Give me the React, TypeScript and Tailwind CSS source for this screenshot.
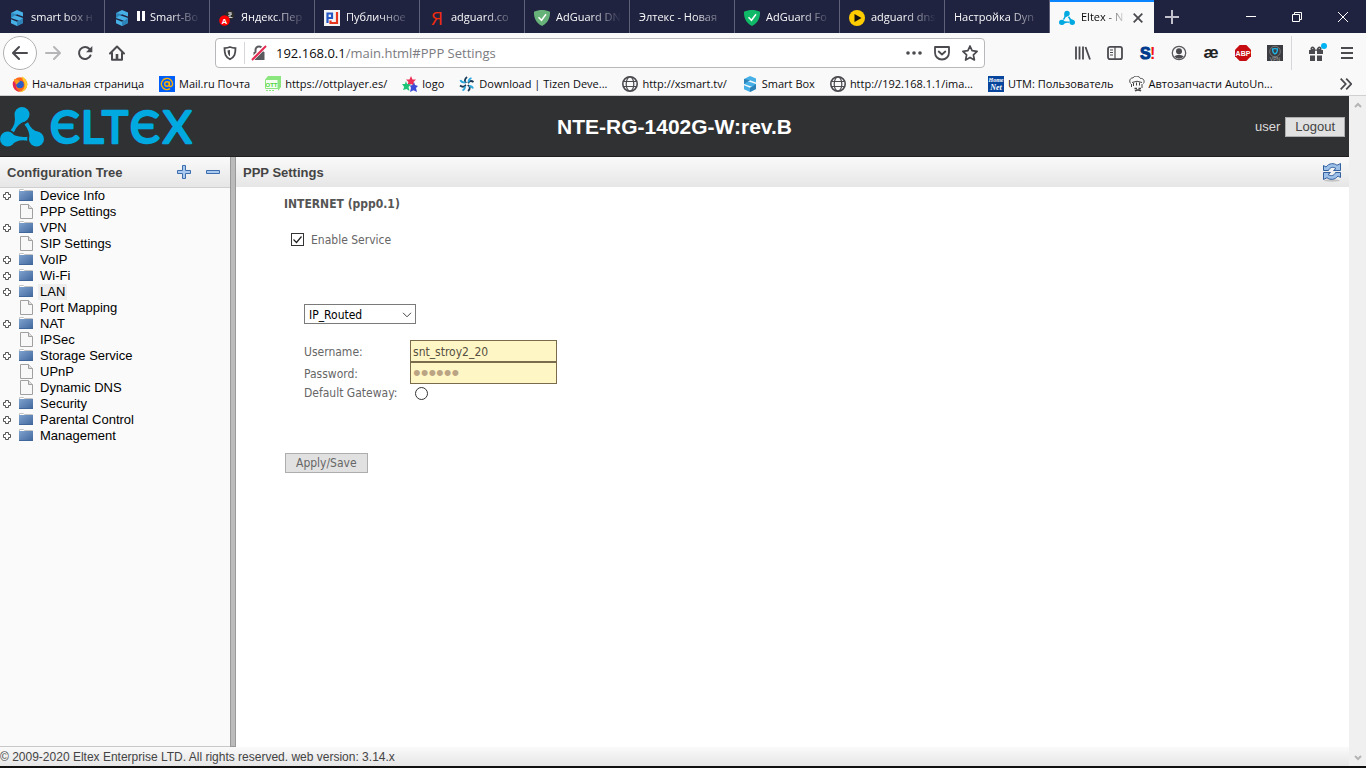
import React, { useState } from 'react';

type IconProps = { className?: string };

const SmartBoxIcon = () => (
  <svg viewBox="0 0 16 16" className="h-4 w-4 shrink-0">
    <path d="M8 0 14 2.600v4L8 4.300 6 5.200 14 8v5L8 16 2 13.200v-4l6 2.500 2-1L2 8V3z" fill="#46b0e6" />
    <path d="M14 8v5L8 16v-4.300l2-1zM2 3l6 1.300L6 5.200 2 8z" fill="#2d83b8" />
  </svg>
);

const TranslateIcon = () => (
  <svg viewBox="0 0 16 16" className="h-4 w-4 shrink-0">
    <circle cx="11" cy="5" r="4.500" fill="#2b2b2b" />
    <path d="M9 3h4M11 2v5M9 6l4-2M9.500 7.500h4" stroke="#ddd" strokeWidth=".9" />
    <circle cx="5.500" cy="10.500" r="5.300" fill="#f00" />
    <text x="5.500" y="13.500" textAnchor="middle" fontSize="8" fontWeight="700" fill="#fff" fontFamily="Liberation Sans">A</text>
  </svg>
);

const PublicIcon = () => (
  <svg viewBox="0 0 16 16" className="h-4 w-4 shrink-0">
    <path d="M0 0h16v16H0z" fill="#f4f4f4" />
    <path d="M3.500 13V3.500h4.500v4.500H3.500" fill="none" stroke="#2456c4" strokeWidth="2.200" />
    <path d="M13 2v11H6.500v-2.500" fill="none" stroke="#e8351e" strokeWidth="2.200" />
  </svg>
);

const YandexIcon = () => (
  <svg viewBox="0 0 16 16" className="h-4 w-4 shrink-0 overflow-visible">
    <text x="8" y="15" textAnchor="middle" fontSize="19" fill="#f22b0c" fontFamily="Open Sans">Я</text>
  </svg>
);

const AdguardIcon = ({ className }: IconProps) => (
  <svg viewBox="0 0 16 16" className={`h-4 w-4 shrink-0 ${className}`}>
    <path d="M8 0c2.600 0 5.500.5 8 1.700C16 4.500 16.300 11.500 8 16-.3 11.500 0 4.500 0 1.700 2.500.5 5.400 0 8 0z" fill="currentColor" />
    <path d="m4.500 7.300 3 3 4.500-6" fill="none" stroke="#fff" strokeWidth="1.500" />
  </svg>
);

const PlayIcon = () => (
  <svg viewBox="0 0 16 16" className="h-4 w-4 shrink-0">
    <circle cx="8" cy="8" r="8" fill="#fc0" />
    <path d="m5.500 4 7 4-7 4z" fill="#111" />
  </svg>
);

const EltexMark = ({ className }: IconProps) => (
  <svg viewBox="0 0 44 40" className={className} fill="#00a9e0">
    <circle cx="22" cy="7.500" r="7.500" />
    <circle cx="7.500" cy="32" r="7.500" />
    <circle cx="36.500" cy="32" r="7.500" />
    <path d="M14.700 9q1.300 8-4 14.200l3.300 2Q17 17 25.500 14z" />
    <path d="M8.500 24.500q7 6.500 18.800 5.200v4Q17 32 10 39z" />
    <path d="M24.500 17.500 28 15.300q3.500 8.700 11.300 9.900L29.500 34q1-9.500-5-16.500z" />
  </svg>
);

const EltexLogo = () => (
  <svg width="194" height="42" viewBox="0 0 194 42" role="img" aria-label="Eltex" className="overflow-visible">
    <svg x="0" y="1" width="44" height="40">
      <EltexMark />
    </svg>
    <text
      x="50 81 102 130 163"
      y="37"
      fontFamily="Lato"
      fontSize="44"
      fill="#00a9e0"
      stroke="#00a9e0"
      strokeWidth="2.500"
      strokeLinejoin="round"
    >
      ЄLTЄX
    </text>
  </svg>
);

const FirefoxIcon = () => (
  <svg viewBox="0 0 16 16" className="h-4 w-4 shrink-0">
    <circle cx="8" cy="8.500" r="7.300" fill="#ff6a1a" />
    <path d="M10 .5c4 2 5.700 5.500 5.200 9C14.500 13.500 11.500 16 8 16c3-1.500 5-4 4.500-8C12.300 5 10 4 10 .5z" fill="#ffcb2e" />
    <path d="M1 5.500C.3 11 3 15.500 8 15.800 4.500 14 3 11 4 7z" fill="#e3225c" />
    <circle cx="8" cy="8.500" r="3.800" fill="#2a5fc9" />
    <path d="M2 3c2 0 5 1 6 3-2 0-2 2-4 2.500z" fill="#ff9a1f" />
  </svg>
);

const MailIcon = () => (
  <svg viewBox="0 0 16 16" className="h-4 w-4 shrink-0">
    <path d="M0 0h16v16H0z" fill="#005ff9" />
    <circle cx="8" cy="8" r="2.300" fill="none" stroke="#ffb000" strokeWidth="1.400" />
    <path d="M10.400 5.500v3.700c0 2.200 3.200 1.700 3.200-1.200A5.600 5.600 0 1 0 11 12.700" fill="none" stroke="#ffb000" strokeWidth="1.400" />
  </svg>
);

const OttIcon = () => (
  <svg viewBox="0 0 16 16" className="h-4 w-4 shrink-0">
    <path d="M0 3.500 3 0h13v11l-3 4V3.500z" fill="#8ce67f" />
    <path d="M.5 3.500H13v9H.5z" fill="#f4fff2" stroke="#8ce67f" />
    <text x="6.500" y="10.500" textAnchor="middle" fontSize="6" fontWeight="700" fill="#4fd33c" fontFamily="Liberation Sans">OTT</text>
    <path d="M1 14.500h8" stroke="#8ce67f" strokeDasharray="2 1" />
  </svg>
);

const StarsIcon = () => (
  <svg viewBox="0 0 16 16" className="h-4 w-4 shrink-0">
    <path d="m9 0 1.500 3.500H14l-2.500 2.500 1 4L9 8 5 9.500 6.500 6 4 3.500h3.500z" fill="#ec2e54" />
    <path d="m4 5 1 3 4 .5-2.500 2.500 1 4L4.500 13 1 14l1.200-3L0 8h3z" fill="#1cc577" />
    <path d="m12 6 1 3 3 1-2 2 1 4-3.500-1.800L8 16l1-4-1-2.500 3-.5z" fill="#3b49d8" />
  </svg>
);

const TizenIcon = () => (
  <svg viewBox="0 0 16 16" className="h-4 w-4 shrink-0" fill="none" strokeWidth="1.800">
    <path d="M7.500 7C5 6 5.500 3 8 1M9 7.500c1-3 3.500-3 5.500-1.500M8.500 9c3 1 3 4 .5 6M7 8.500c-1 2.500-3.500 3-6 1" stroke="#173a57" />
    <path d="M6.500 6.500C4 6.500 2 6 1.500 4M9.500 6.500c0-3 1-4 3-4.500M10 10c2 0 3.500 1 4 2.500M6 10.500c0 2-.5 3-2.500 4" stroke="#29a6dd" />
    <circle cx="8" cy="8" r="1.300" fill="#fff" stroke="none" />
  </svg>
);

const GlobeIcon = () => (
  <svg viewBox="0 0 16 16" className="h-4 w-4 shrink-0" fill="none" stroke="#4a4a4f" strokeWidth="1.200">
    <circle cx="8" cy="8" r="7.200" strokeWidth="1.600" />
    <ellipse cx="8" cy="8" rx="3.800" ry="7.200" />
    <path d="M1.500 5.500h13M1.500 10.500h13" />
  </svg>
);

const HomeNetIcon = () => (
  <svg viewBox="0 0 16 16" className="h-4 w-4 shrink-0" fontFamily="Liberation Serif" fontStyle="italic" fontWeight="700">
    <path d="M0 0h16v16H0z" fill="#08459c" />
    <text x="8" y="6" textAnchor="middle" fontSize="6" fill="#fff">Home</text>
    <text x="8" y="14" textAnchor="middle" fontSize="8" fill="#fff">Net</text>
  </svg>
);

const AutoIcon = () => (
  <svg viewBox="0 0 16 16" className="h-4 w-4 shrink-0" fill="none" stroke="#444">
    <path d="M1.500 7.500C-.5 4 2 1.500 4 2c1-2.500 6-2.500 7.500.5 3-.5 4.500 2.500 3 5" />
    <path d="M3 6.500q5-2.500 10 0M4.500 7v3M7.500 6.500v3M10.500 6.500v3M13 8v4M2.500 8v3" />
    <path d="M5.500 12.500H8M9.500 12.500H12M6 15q3-2 6 0" strokeWidth="1.500" />
  </svg>
);

const PauseIcon = () => (
  <svg viewBox="0 0 10 10" className="mr-1 inline h-[10px] w-[10px] align-baseline">
    <path d="M1 0h3v10H1zM6 0h3v10H6z" fill="#fff" />
  </svg>
);

type Tab = { title: string; icon?: React.ReactNode; paused?: boolean };

const tabs: Tab[] = [
  { title: 'smart box н', icon: <SmartBoxIcon /> },
  { title: 'Smart-Bo', icon: <SmartBoxIcon />, paused: true },
  { title: 'Яндекс.Пер', icon: <TranslateIcon /> },
  { title: 'Публичное', icon: <PublicIcon /> },
  { title: 'adguard.co', icon: <YandexIcon /> },
  { title: 'AdGuard DN', icon: <AdguardIcon className="text-[#67b279]" /> },
  { title: 'Элтекс - Новая' },
  { title: 'AdGuard Fo', icon: <AdguardIcon className="text-[#10b968]" /> },
  { title: 'adguard dns', icon: <PlayIcon /> },
  { title: 'Настройка Dyn' },
];

const bookmarks = [
  { label: 'Начальная страница', icon: <FirefoxIcon /> },
  { label: 'Mail.ru Почта', icon: <MailIcon /> },
  { label: 'https://ottplayer.es/', icon: <OttIcon /> },
  { label: 'logo', icon: <StarsIcon /> },
  { label: 'Download | Tizen Deve...', icon: <TizenIcon /> },
  { label: 'http://xsmart.tv/', icon: <GlobeIcon /> },
  { label: 'Smart Box', icon: <SmartBoxIcon /> },
  { label: 'http://192.168.1.1/ima...', icon: <GlobeIcon /> },
  { label: 'UTM: Пользователь', icon: <HomeNetIcon /> },
  { label: 'Автозапчасти AutoUn...', icon: <AutoIcon /> },
];

const tree = [
  { label: 'Device Info', folder: true },
  { label: 'PPP Settings', folder: false },
  { label: 'VPN', folder: true },
  { label: 'SIP Settings', folder: false },
  { label: 'VoIP', folder: true },
  { label: 'Wi-Fi', folder: true },
  { label: 'LAN', folder: true, hovered: true },
  { label: 'Port Mapping', folder: false },
  { label: 'NAT', folder: true },
  { label: 'IPSec', folder: false },
  { label: 'Storage Service', folder: true },
  { label: 'UPnP', folder: false },
  { label: 'Dynamic DNS', folder: false },
  { label: 'Security', folder: true },
  { label: 'Parental Control', folder: true },
  { label: 'Management', folder: true },
];

function TabStrip() {
  return (
    <div className="flex h-[33px] shrink-0 bg-[#202340] text-[11px] text-[#f9f9fa]">
      {tabs.map((tab) => (
        <button key={tab.title} className="flex w-[105px] min-w-0 items-center gap-[6px] border-r border-[#5f6178] pt-[2px] pr-2 pl-[9px]">
          {tab.icon}
          <span className="min-w-0 flex-1 overflow-hidden text-left whitespace-nowrap [mask-image:linear-gradient(to_right,black_calc(100%-32px),transparent)]">
            {tab.paused && <PauseIcon />}
            {tab.title}
          </span>
        </button>
      ))}
      <div className="flex w-[104px] items-center gap-[6px] border-t-2 border-[#0a84ff] bg-[#f9f9fa] pl-[9px] text-[#0c0c0d]">
        <EltexMark className="h-4 w-4 shrink-0" />
        <span className="w-[46px] overflow-hidden whitespace-nowrap [mask-image:linear-gradient(to_right,black_50%,transparent)]">Eltex - N</span>
        <button aria-label="Close tab">
          <svg viewBox="0 0 10 10" className="h-[10px] w-[10px]" stroke="#4a4a4f" strokeWidth="1.800">
            <path d="m.7.7 8.600 8.600M9.300.7.7 9.300" />
          </svg>
        </button>
      </div>
      <button aria-label="New tab" className="ml-[11px]">
        <svg viewBox="0 0 14 14" className="h-[14px] w-[14px]" stroke="#c0c1cc" strokeWidth="2">
          <path d="M7 0v14M0 7h14" />
        </svg>
      </button>
      <div className="ml-auto flex items-center gap-9 pr-[18px]">
        <button aria-label="Minimize">
          <svg viewBox="0 0 10 10" className="h-[10px] w-[10px]" stroke="#fff">
            <path d="M0 4.500h10" />
          </svg>
        </button>
        <button aria-label="Restore">
          <svg viewBox="0 0 10 10" className="h-[10px] w-[10px]" stroke="#fff" fill="none">
            <path d="M.5 2.500h7v7h-7zM2.500 2.500v-2h7v7h-2" />
          </svg>
        </button>
        <button aria-label="Close">
          <svg viewBox="0 0 10 10" className="h-[10px] w-[10px]" stroke="#fff">
            <path d="m0 0 10 10M10 0 0 10" />
          </svg>
        </button>
      </div>
    </div>
  );
}

function NavBar() {
  return (
    <div className="flex h-10 shrink-0 items-center pl-[3px] text-[#4a4a4f]">
      <button aria-label="Back" className="flex h-[34px] w-[34px] items-center justify-center rounded-full border border-[#b1b1b3] bg-white">
        <svg viewBox="0 0 16 16" className="h-4 w-4" fill="none" stroke="currentColor" strokeWidth="2" strokeLinecap="round" strokeLinejoin="round">
          <path d="M15 8H1.500M7 2 1 8l6 6" />
        </svg>
      </button>
      <button aria-label="Forward" className="ml-2 text-[#b6b6b8]">
        <svg viewBox="0 0 16 16" className="h-4 w-4" fill="none" stroke="currentColor" strokeWidth="2" strokeLinecap="round" strokeLinejoin="round">
          <path d="M1 8h13.500M9 2l6 6-6 6" />
        </svg>
      </button>
      <button aria-label="Reload" className="ml-4">
        <svg viewBox="0 0 16 16" className="h-4 w-4" fill="none" stroke="currentColor" strokeWidth="2">
          <path d="M13.500 10.500A6 6 0 1 1 12.500 4" strokeLinecap="round" />
          <path d="M15.300 1v6.300H9z" fill="currentColor" stroke="none" />
        </svg>
      </button>
      <button aria-label="Home" className="ml-4">
        <svg viewBox="0 0 16 16" className="h-4 w-4" fill="none" stroke="currentColor" strokeWidth="2" strokeLinecap="round" strokeLinejoin="round">
          <path d="M1 8.500 8 1.500l7 7M3 8v6.800h10V8" />
          <path d="M6.700 14V9h2.600v5z" fill="currentColor" stroke="none" />
        </svg>
      </button>
      <div className="ml-[90px] flex h-[30px] min-w-0 flex-1 items-center rounded-sm border border-[#b8b8ba] bg-white px-[6px]">
        <svg viewBox="0 0 16 16" className="h-4 w-4 shrink-0" fill="none" stroke="currentColor" strokeWidth="1.800">
          <path d="M8 2c2 .8 3.700 1 5.500 1.100C13.500 9 12.500 12 8 14.300 3.500 12 2.500 9 2.500 3.100 4.300 3 6 2.800 8 2z" />
          <path d="M8 5c-1 .3-1.700.4-2.500.5.200 3 1 4.800 2.500 5.800z" fill="currentColor" stroke="none" />
        </svg>
        <span className="mx-[6px] h-[22px] w-px shrink-0 bg-[#d7d7db]" />
        <svg viewBox="0 0 16 16" className="h-4 w-4 shrink-0">
          <path d="M4.500 7V5a3.500 3.500 0 0 1 7 0v2" fill="none" stroke="#5a5a5e" strokeWidth="2" />
          <path d="M2.500 7h11v8h-11z" fill="#5a5a5e" />
          <path d="M1 14.500 14.500 1" stroke="#fff" strokeWidth="4" />
          <path d="M1 15 15 1" stroke="#e22850" strokeWidth="2" />
        </svg>
        <p className="ml-[9px] min-w-0 flex-1 truncate pt-[2px] text-[13px] text-[#7b7b80]">
          <span className="text-[#0c0c0d]">192.168.0.1</span>/main.html#PPP Settings
        </p>
        <button aria-label="Page actions">
          <svg viewBox="0 0 16 16" className="h-4 w-4" fill="currentColor">
            <circle cx="2" cy="8" r="1.800" />
            <circle cx="8" cy="8" r="1.800" />
            <circle cx="14" cy="8" r="1.800" />
          </svg>
        </button>
        <button aria-label="Save to Pocket" className="ml-3">
          <svg viewBox="0 0 16 16" className="h-4 w-4" fill="none" stroke="currentColor" strokeWidth="1.800">
            <path d="M1 2h14v5.500C15 11.500 12 14.500 8 14.500S1 11.500 1 7.500z" strokeLinejoin="round" />
            <path d="m4.700 6.500 3.300 3 3.300-3" strokeLinecap="round" strokeLinejoin="round" />
          </svg>
        </button>
        <button aria-label="Bookmark this page" className="ml-3">
          <svg viewBox="0 0 16 16" className="h-4 w-4" fill="none" stroke="currentColor" strokeWidth="1.700" strokeLinejoin="round">
            <path d="m8 1 2.100 4.700 5 .6-3.700 3.500 1 5.200L8 12.400 3.600 15l1-5.200L.9 6.300l5-.6z" />
          </svg>
        </button>
      </div>
      <div className="ml-[90px] flex h-full items-center gap-4">
        <button aria-label="Library">
          <svg viewBox="0 0 16 16" className="h-4 w-4" stroke="currentColor" strokeWidth="1.800">
            <path d="M1 1.500v13M4.500 1.500v13M8 1.500v13M10.500 2l4.500 12.500" />
          </svg>
        </button>
        <button aria-label="Sidebars">
          <svg viewBox="0 0 16 16" className="h-4 w-4" fill="none" stroke="currentColor" strokeWidth="1.800">
            <rect x="1" y="1.800" width="14" height="12.400" rx="2" />
            <path d="M8 2v12M3 5h3M3 7.500h3M3 10h3" strokeWidth="1.200" />
          </svg>
        </button>
        <button aria-label="Seo toolbar">
          <svg viewBox="0 0 16 16" className="h-4 w-4 overflow-visible" fontFamily="Liberation Sans" fontWeight="700" fontSize="16">
            <text x="1" y="14" fill="#003a8c" stroke="#003a8c">S</text>
            <text x="11" y="14" fill="#f01414">!</text>
          </svg>
        </button>
        <button aria-label="Account">
          <svg viewBox="0 0 16 16" className="h-4 w-4">
            <circle cx="8" cy="8" r="6.700" fill="none" stroke="#5a5a5e" strokeWidth="1.300" />
            <circle cx="8" cy="6.300" r="3" fill="#4a4a4f" />
            <path d="M3.200 11.300q4.800-3 9.600 0Q11 13.700 8 13.700t-4.800-2.400z" fill="#4a4a4f" />
          </svg>
        </button>
        <button aria-label="Extension">
          <svg viewBox="0 0 16 16" className="h-4 w-4 overflow-visible">
            <text x="8" y="12.500" textAnchor="middle" fontFamily="Liberation Sans" fontWeight="700" fontSize="17" fill="#222">æ</text>
          </svg>
        </button>
        <button aria-label="Adblock Plus">
          <svg viewBox="0 0 16 16" className="h-4 w-4">
            <path d="M4.700 0h6.600L16 4.700v6.600L11.300 16H4.700L0 11.300V4.700z" fill="#c70d12" />
            <text x="8" y="10.600" textAnchor="middle" fontFamily="Liberation Sans" fontWeight="700" fontSize="7" fill="#fff">ABP</text>
          </svg>
        </button>
        <button aria-label="VPN">
          <svg viewBox="0 0 16 16" className="h-4 w-4">
            <path d="M0 0h16v16H0z" fill="#3b3d42" />
            <circle cx="8" cy="6.500" r="5.300" fill="none" stroke="#777" />
            <path d="M8 3.500c1 .4 1.700.5 2.500.5 0 2.500-.7 4-2.500 5-1.800-1-2.500-2.500-2.500-5 .8 0 1.500-.1 2.500-.5z" fill="none" stroke="#1fb6ea" strokeWidth="1.300" />
            <text x="8" y="15.500" textAnchor="middle" fontFamily="Liberation Sans" fontSize="5" fill="#aaa">VPN</text>
          </svg>
        </button>
      </div>
      <div className="ml-2 flex h-[34px] items-center gap-[13px] border-l border-[#d7d7db] pr-[13px] pl-4">
        <button aria-label="What's new">
          <svg viewBox="0 0 20 16" className="h-4 w-5 overflow-visible" fill="#4a4a4f">
            <path d="M1 5h6v4H1zM9 5h6v4H9zM2 10.500h5V16H2zM9 10.500h5V16H9z" />
            <path d="M7 5Q5 1 3.500 3T7 5zM9 5q2-4 3.500-2T9 5z" fill="none" stroke="#4a4a4f" strokeWidth="1.500" />
            <circle cx="16" cy="1" r="3" fill="#00b3f4" />
          </svg>
        </button>
        <button aria-label="Menu">
          <svg viewBox="0 0 12 12" className="h-3 w-3" stroke="currentColor" strokeWidth="2">
            <path d="M0 1h12M0 6h12M0 11h12" />
          </svg>
        </button>
      </div>
    </div>
  );
}

function BookmarksBar() {
  return (
    <div className="flex h-[23px] shrink-0 items-center gap-[15px] border-b border-[#d0d0d2] pr-[14px] pl-3 text-[11px] text-[#0c0c0d]">
      {bookmarks.map((item) => (
        <a key={item.label} href="#" className="flex items-center gap-1 whitespace-nowrap">
          {item.icon}
          {item.label}
        </a>
      ))}
      <button aria-label="More bookmarks" className="ml-auto">
        <svg viewBox="0 0 12 12" className="h-3 w-3" fill="none" stroke="#4a4a4f" strokeWidth="1.800">
          <path d="m.7.700 5 5.300-5 5.300M6.200.700l5 5.300-5 5.300" />
        </svg>
      </button>
    </div>
  );
}

function PageHeader() {
  return (
    <header className="grid h-[61px] shrink-0 grid-cols-[1fr_auto_1fr] items-center border-b border-[#231f20] bg-[#303133] pt-[2px]">
      <EltexLogo />
      <h1 className="text-[21px] font-bold text-white">NTE-RG-1402G-W:rev.B</h1>
      <div className="flex items-center justify-end gap-[5px] pr-1 text-[13px] text-[#dcdcdc]">
        user
        <button className="h-5 border border-[#adadad] bg-[#e1e1e1] px-[9px] leading-[18px] text-[#444]">Logout</button>
      </div>
    </header>
  );
}

const FolderIcon = () => (
  <svg viewBox="0 0 14 14" className="h-[14px] w-[14px]">
    <defs>
      <linearGradient id="folder" x1="0" y1="0" x2="1" y2="1">
        <stop offset="0" stopColor="#7ea3cf" />
        <stop offset="1" stopColor="#41669c" />
      </linearGradient>
    </defs>
    <path d="M.5 3V.5h4l1 1h8V3" fill="#fff" stroke="#c4c4c4" />
    <path d="M0 2h14v10H0z" fill="url(#folder)" />
    <path d="M0 11.500h14" stroke="#41669c" />
  </svg>
);

const FileIcon = () => (
  <svg viewBox="0 0 14 16" className="h-4 w-[14px]">
    <path d="M1.500.5h8l4 4v10h-12z" fill="#f8f8f8" stroke="#a0a0a0" />
    <path d="M9.500.5v4h4" fill="#e0e0e0" stroke="#a0a0a0" />
  </svg>
);

const ExpandIcon = () => (
  <svg viewBox="0 0 8 8" className="h-2 w-2">
    <path d="M2.500.5h3v2h2v3h-2v2h-3v-2h-2v-3h2z" fill="#fff" stroke="#555" />
  </svg>
);

function Sidebar() {
  return (
    <aside className="flex w-[230px] shrink-0 flex-col border-b border-[#c8c8c8] bg-[#fafafa]">
      <div className="flex h-[31px] shrink-0 items-center border-b border-[#d0d0d0] bg-linear-to-b from-[#fafafa] to-[#e6e6e6] pr-[10px] pl-[7px]">
        <h2 className="pt-px text-[13px] font-bold text-[#444]">Configuration Tree</h2>
        <button aria-label="Expand all" className="ml-auto">
          <svg viewBox="0 0 14 14" className="h-[14px] w-[14px]">
            <path d="M5.500.5h3v5h5v3h-5v5h-3v-5h-5v-3h5z" fill="#a9c9ee" stroke="#3c6cae" />
          </svg>
        </button>
        <button aria-label="Collapse all" className="ml-[15px]">
          <svg viewBox="0 0 14 14" className="h-[14px] w-[14px]">
            <path d="M.5 5.500h13v3H.5z" fill="#a9c9ee" stroke="#3c6cae" />
          </svg>
        </button>
      </div>
      <ul className="text-[13px] leading-4 text-black">
        {tree.map((node) => (
          <li key={node.label} className="flex h-4 items-center pl-[3px]">
            <span className="w-4 shrink-0">{node.folder && <ExpandIcon />}</span>
            {node.folder ? <FolderIcon /> : <FileIcon />}
            <a href="#" className={`ml-[5px] px-[2px] ${node.hovered ? 'bg-[#eee]' : ''}`}>
              {node.label}
            </a>
          </li>
        ))}
      </ul>
    </aside>
  );
}

const RefreshIcon = () => (
  <svg viewBox="0 0 20 20" className="h-5 w-5">
    <ellipse cx="10" cy="18.500" rx="8" ry="1.200" fill="#c4c4c4" />
    <g fill="#9dc0e8" stroke="#33609f" strokeLinejoin="round">
      <path d="M1.500 8.500v-5l2.500 1.500C7 1 12 .8 15 3.300L18.500 1.500v7h-7L14 6.500C11 4.500 8 5 6.500 8.500z" />
      <path d="M18.500 10.500v5L16 14c-3 4-8 4.200-11 1.700l-3.500 1.800v-7h7L6 12.500c3 2 6 1.500 7.500-2z" />
    </g>
  </svg>
);

function PppSettings() {
  const [enabled, setEnabled] = useState(true);
  const [mode, setMode] = useState('IP_Routed');
  const [username, setUsername] = useState('snt_stroy2_20');
  const [password, setPassword] = useState('secret');

  return (
    <main className="min-w-0 flex-1 bg-white">
      <div className="flex h-[30px] items-center justify-between bg-linear-to-b from-[#fafafa] to-[#e6e6e6] pr-[7px] pl-[7px]">
        <h2 className="pt-px text-[13px] font-bold text-[#444]">PPP Settings</h2>
        <button aria-label="Refresh">
          <RefreshIcon />
        </button>
      </div>
      <form className="pt-[9px] pl-12 font-['DejaVu_Sans_Condensed','DejaVu_Sans',sans-serif] text-xs text-[#666] [font-stretch:condensed]" onSubmit={(e) => e.preventDefault()}>
        <h3 className="leading-4 font-bold text-[#555]">INTERNET (ppp0.1)</h3>
        <div className="mt-[18px] flex h-[18px] items-center gap-[7px] pl-[7px]">
          <span className="relative flex h-[13px] w-[13px]">
            <input
              id="enable"
              type="checkbox"
              checked={enabled}
              onChange={(e) => setEnabled(e.target.checked)}
              className="h-[13px] w-[13px] appearance-none border border-[#333] bg-white"
            />
            {enabled && (
              <svg viewBox="0 0 13 13" className="pointer-events-none absolute inset-0" fill="none" stroke="#222" strokeWidth="1.200">
                <path d="m2.500 6.500 3 3 5-6" />
              </svg>
            )}
          </span>
          <label htmlFor="enable" className="pt-[2px]">Enable Service</label>
        </div>
        <div className="relative mt-14 ml-5 w-28">
          <select
            aria-label="Connection mode"
            value={mode}
            onChange={(e) => setMode(e.target.value)}
            className="block h-5 w-full appearance-none border border-[#7a7a7a] bg-white pt-px pl-1 text-black"
          >
            <option>IP_Routed</option>
            <option>Bridge</option>
          </select>
          <svg viewBox="0 0 10 6" className="pointer-events-none absolute top-2 right-1 h-[6px] w-[10px]" fill="none" stroke="#444">
            <path d="m1 .8 4 4 4-4" />
          </svg>
        </div>
        <div className="mt-4 ml-5 grid grid-cols-[106px_147px] items-center">
          <label htmlFor="username" className="pt-[2px]">Username:</label>
          <input
            id="username"
            value={username}
            onChange={(e) => setUsername(e.target.value)}
            className="h-[22px] border border-[#7a6b4c] bg-[#fff6c5] px-[2px] pt-px text-[#555042]"
          />
          <label htmlFor="password" className="pt-[2px]">Password:</label>
          <input
            id="password"
            type="password"
            value={password}
            onChange={(e) => setPassword(e.target.value)}
            className="h-[22px] border border-[#7a6b4c] bg-[#fff6c5] px-[2px] font-['Liberation_Sans'] text-[22px] leading-5 text-[#bba483]"
          />
          <label htmlFor="gateway">Default Gateway:</label>
          <span className="flex h-[18px] items-center pl-[5px]">
            <input id="gateway" type="radio" className="h-[13px] w-[13px] appearance-none rounded-full border border-[#333] bg-white" />
          </span>
        </div>
        <button className="mt-[51px] ml-px h-5 border border-[#adadad] bg-[#e1e1e1] px-[10px]">Apply/Save</button>
      </form>
    </main>
  );
}

const ScrollArrow = ({ className }: IconProps) => (
  <svg viewBox="0 0 8 6" className={`h-[6px] w-2 ${className ?? ''}`} fill="none" stroke="#b5b5b5" strokeWidth="2">
    <path d="m1 5 3-3 3 3" />
  </svg>
);

export default function App() {
  return (
    <div className="flex h-screen flex-col overflow-hidden bg-[#f9f9fa] font-['Open_Sans','Noto_Sans',sans-serif]">
      <TabStrip />
      <NavBar />
      <BookmarksBar />
      <div className="flex min-h-0 flex-1 border-b-2 border-[#101010]">
        <div className="flex min-w-0 flex-1 flex-col font-['Liberation_Sans',Arial,sans-serif]">
          <PageHeader />
          <div className="flex min-h-0 flex-1">
            <Sidebar />
            <div className="w-[6px] shrink-0 border border-t-0 border-[#999] bg-[#bbb]" />
            <PppSettings />
          </div>
          <footer className="h-[19px] shrink-0 bg-linear-to-b from-[#fafafa] to-[#e6e6e6] text-xs leading-5 text-[#444]">
            © 2009-2020 Eltex Enterprise LTD. All rights reserved. web version: 3.14.x
          </footer>
        </div>
        <div className="flex w-[17px] shrink-0 flex-col items-center justify-between bg-[#f0f0f0] pt-[6px] pb-[5px]">
          <ScrollArrow />
          <ScrollArrow className="rotate-180" />
        </div>
      </div>
    </div>
  );
}
